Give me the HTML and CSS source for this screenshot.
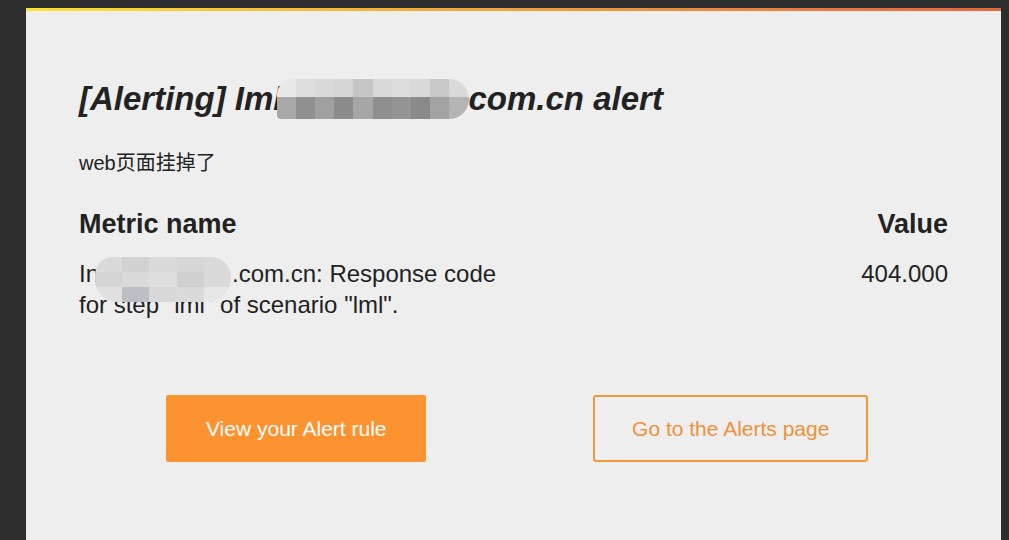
FILE: index.html
```html
<!DOCTYPE html>
<html lang="zh-CN">
<head>
  <meta charset="UTF-8">
  <title>[Alerting] alert</title>
  <link rel="stylesheet" href="styles.css">
</head>
<body>
  <div class="card">
    <div class="stripe"></div>
    <div class="content">
      <h1 class="title">[Alerting] Iml<span class="redact redact-title"><i></i><i></i><i></i><i></i><i></i><i></i><i></i><i></i><i></i><i></i><i></i><i></i><i></i><i></i><i></i><i></i><i></i><i></i><i></i><i></i></span>com.cn alert</h1>
      <p class="message">web页面挂掉了</p>

      <div class="metrics">
        <div class="metric-head">Metric name</div>
        <div class="metric-head value">Value</div>
        <div class="metric-name">
          In<span class="gap"></span>.com.cn: Response code for step "lml" of scenario "lml".
          <span class="redact redact-row"><i></i><i></i><i></i><i></i><i></i><i></i><i></i><i></i><i></i><i></i><i></i><i></i><i></i><i></i><i></i></span>
        </div>
        <div class="metric-value">404.000</div>
      </div>

      <div class="actions">
        <a class="btn btn-primary" href="#">View your Alert rule</a>
        <a class="btn btn-outline" href="#">Go to the Alerts page</a>
      </div>
    </div>
  </div>
</body>
</html>
```

FILE: styles.css
```css
:root {
  --page-bg: #2d2d2d;
  --card-bg: #eeeeee;
  --text: #222222;
  --orange: #fd9330;
  --orange-line: #f5983a;
  --font: "Liberation Sans", Arial, "Noto Sans CJK SC", sans-serif;
}

* {
  margin: 0;
  padding: 0;
  box-sizing: border-box;
}

html, body {
  height: 100%;
  overflow: hidden;
}

body {
  background: var(--page-bg);
  padding: 8px 8px 0 26px;
  font-family: var(--font);
  color: var(--text);
}

.card {
  background: var(--card-bg);
  min-height: 100%;
}

.stripe {
  height: 3px;
  background: linear-gradient(90deg, #fbe331 0%, #f5b93a 30%, #f09a3c 55%, #e97c3d 80%, #e2673d 100%);
}

.content {
  padding: 68px 53px 0 53px;
}

.title {
  font-size: 33px;
  font-weight: bold;
  font-style: italic;
  line-height: 40px;
  white-space: nowrap;
}

.redact {
  display: inline-grid;
}

.redact-title {
  width: 192px;
  height: 40px;
  vertical-align: top;
  grid-template-columns: repeat(10, 1fr);
  grid-template-rows: 18px 22px;
  border-radius: 16px 20px 20px 4px;
  overflow: hidden;
  margin-left: -6px;
}

.redact-title i:nth-child(-n+10) { background: #d9d9d9; }
.redact-title i:nth-child(1) { background: #e8e8e8; }
.redact-title i:nth-child(2) { background: #dedede; }
.redact-title i:nth-child(4) { background: #d6d6d6; }
.redact-title i:nth-child(5) { background: #c6c6c6; }
.redact-title i:nth-child(7) { background: #dcdcdc; }
.redact-title i:nth-child(9) { background: #c8c8c8; }
.redact-title i:nth-child(n+11) { background: #9b9b9b; }
.redact-title i:nth-child(11) { background: #a8a8a8; }
.redact-title i:nth-child(12) { background: #909090; }
.redact-title i:nth-child(13) { background: #a0a0a0; }
.redact-title i:nth-child(14) { background: #8c8c8c; }
.redact-title i:nth-child(15) { background: #a6a6a6; }
.redact-title i:nth-child(16) { background: #8f8f8f; }
.redact-title i:nth-child(17) { background: #949494; }
.redact-title i:nth-child(18) { background: #8a8a8a; }
.redact-title i:nth-child(19) { background: #a3a3a3; }
.redact-title i:nth-child(20) { background: #b4b4b4; }

.message {
  margin-top: 32px;
  font-size: 20px;
  line-height: 24px;
}

.metrics {
  display: grid;
  grid-template-columns: 430px 1fr;
  margin-top: 33px;
  row-gap: 18px;
}

.metric-head {
  font-size: 27px;
  font-weight: bold;
  line-height: 32px;
}

.value,
.metric-value {
  text-align: right;
}

.metric-name,
.metric-value {
  font-size: 24px;
  line-height: 31px;
}

.metric-name {
  position: relative;
}

.gap {
  display: inline-block;
  width: 133px;
}

.redact-row {
  position: absolute;
  left: 16px;
  top: -1px;
  width: 136px;
  height: 45px;
  grid-template-columns: repeat(5, 1fr);
  grid-template-rows: repeat(3, 1fr);
  border-radius: 18px 20px 24px 22px;
  overflow: hidden;
}

.redact-row i { background: #dadada; }
.redact-row i:nth-child(2) { background: #d2d2d2; }
.redact-row i:nth-child(4) { background: #d6d6d6; }
.redact-row i:nth-child(6) { background: #d4d4d4; }
.redact-row i:nth-child(8) { background: #dedede; }
.redact-row i:nth-child(9) { background: #d0d0d0; }
.redact-row i:nth-child(11) { background: #e0e0e0; }
.redact-row i:nth-child(12) { background: #bcc0c5; }
.redact-row i:nth-child(13) { background: #d8d8d8; }
.redact-row i:nth-child(15) { background: #e6e6e6; }

.actions {
  display: grid;
  grid-template-columns: 1fr 1fr;
  justify-items: center;
  margin-top: 75px;
}

.btn {
  display: inline-block;
  height: 67px;
  font-size: 21px;
  line-height: 67px;
  text-decoration: none;
  border-radius: 2px;
}

.btn-primary {
  width: 260px;
  text-align: center;
  background: var(--orange);
  color: #fff;
}

.btn-outline {
  width: 275px;
  text-align: center;
  line-height: 63px;
  border: 2px solid var(--orange-line);
  border-radius: 3px;
  color: #f0913a;
}
```
